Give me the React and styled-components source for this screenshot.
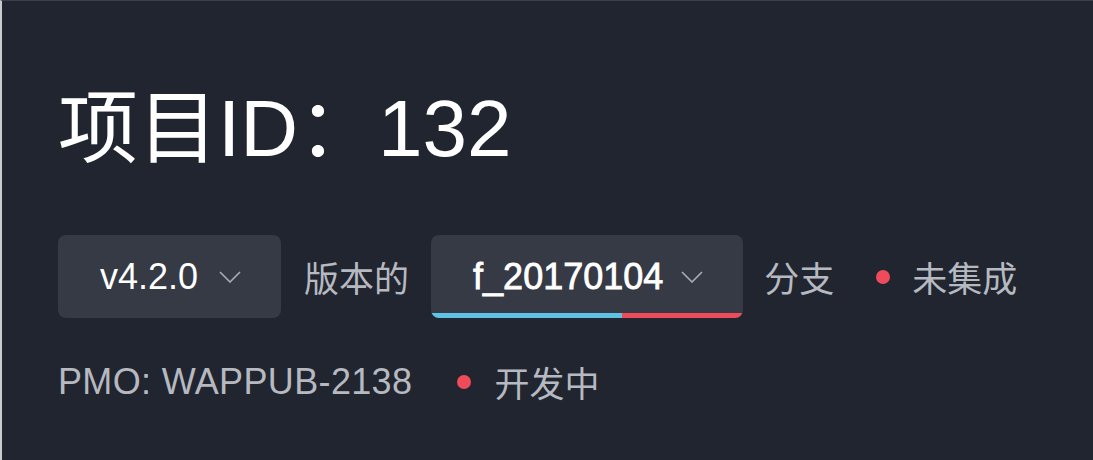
import React from "react";
import styled, { createGlobalStyle } from "styled-components";

const GlobalStyle = createGlobalStyle`
  html, body {
    margin: 0;
    padding: 0;
    background: #20252f;
  }
  * {
    box-sizing: border-box;
  }
`;

const Panel = styled.div`
  width: 1093px;
  height: 460px;
  background: #20252f;
  border-left: 2px solid #c9cbd0;
  border-top: 1px solid #3a3f4b;
  padding: 78px 0 0 56px;
  font-family: "Liberation Sans", "Noto Sans CJK SC", sans-serif;
  display: flex;
  flex-direction: column;
`;

const Title = styled.h1`
  margin: 0;
  font-size: 80px;
  font-weight: 400;
  line-height: 100px;
  color: #ffffff;
  letter-spacing: 0;
`;

const Row = styled.div`
  display: flex;
  align-items: center;
  margin-top: ${(p) => p.$top}px;
`;

const Select = styled.div`
  position: relative;
  height: 83px;
  display: flex;
  align-items: center;
  gap: ${(p) => (p.$bold ? 18 : 21)}px;
  padding: 0 40px 0 42px;
  background: #363a45;
  border-radius: 8px;
  overflow: hidden;
  color: #ffffff;
  font-size: 36px;
  font-weight: 400;
  -webkit-text-stroke: ${(p) => (p.$bold ? "0.8px #ffffff" : "0")};
`;

/* progress stripe laid over the bottom edge of the branch select */
const Stripe = styled.div`
  position: absolute;
  left: 0;
  right: 0;
  bottom: 0;
  height: 5px;
  display: flex;
`;

const StripePart = styled.div`
  height: 100%;
  background: ${(p) => p.$color};
`;

const Label = styled.span`
  color: #b6b9c0;
  font-size: ${(p) => p.$size || 35}px;
  letter-spacing: ${(p) => p.$spacing || 0}px;
  margin-left: ${(p) => p.$left || 0}px;
  white-space: nowrap;
`;

const Dot = styled.span`
  width: 14px;
  height: 14px;
  border-radius: 50%;
  background: #f04b5b;
  margin-left: ${(p) => p.$left}px;
  margin-right: ${(p) => p.$right}px;
  flex: none;
`;

const Chevron = () => (
  <svg width="22" height="12" viewBox="0 0 22 12" fill="none">
    <path d="M1 1l10 10 10-10" stroke="#a9acb4" strokeWidth="1.6" />
  </svg>
);

export default function App() {
  return (
    <>
      <GlobalStyle />
      <Panel>
        <Title>项目ID：132</Title>
        <Row $top={56}>
          <Select>
            <span>v4.2.0</span>
            <Chevron />
          </Select>
          <Label $left={23}>版本的</Label>
          <Select $bold style={{ marginLeft: 22 }}>
            <span>f_20170104</span>
            <Chevron />
            <Stripe>
              <StripePart $color="#5fc2e4" style={{ width: "61%" }} />
              <StripePart $color="#f04b5b" style={{ width: "39%" }} />
            </Stripe>
          </Select>
          <Label $left={21}>分支</Label>
          <Dot $left={42} $right={22} />
          <Label>未集成</Label>
        </Row>
        <Row $top={38}>
          <Label $size={36} $spacing={0.35}>PMO: WAPPUB-2138</Label>
          <Dot $left={45} $right={23} />
          <Label>开发中</Label>
        </Row>
      </Panel>
    </>
  );
}
